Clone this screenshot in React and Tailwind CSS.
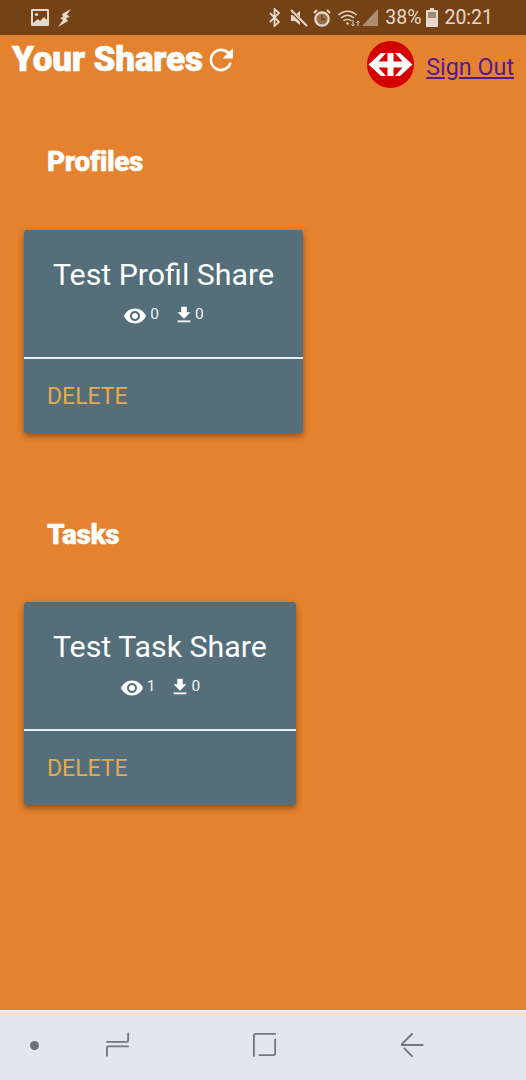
const font = { fontFamily: 'Roboto, sans-serif' };

function StatusBar() {
  return (
    <div className="h-[35px] shrink-0 bg-[#744215] flex items-center text-[#e6d9cc] relative">
      <div className="flex items-center pl-[31px] gap-[9px]">
        <svg width="18" height="17" viewBox="0 0 18 17" className="block">
          <path fill="#e6d9cc" d="M1 0h16a1 1 0 0 1 1 1v15a1 1 0 0 1-1 1H1a1 1 0 0 1-1-1V1a1 1 0 0 1 1-1z" />
          <path fill="#744215" d="M2 2h14v9l-3-3-4 4-2-2-5 4z" />
          <circle cx="5.5" cy="5.5" r="1.6" fill="#e6d9cc" />
        </svg>
        <svg width="14" height="18" viewBox="0 0 14 18" className="block">
          <path fill="#e6d9cc" d="M13 0 4 5l1 3-3 1 3 2-5 7 10-6-2-3 4-1-3-2.5z" />
        </svg>
      </div>
      <div className="ml-auto flex items-center pr-[33px]">
        <svg width="12" height="19" viewBox="0 0 12 19" className="block mr-[9px]" fill="none" stroke="#e6d9cc" strokeWidth="1.8">
          <path d="M1 5l9 9-4.500 4V1L10 5 1 14" />
        </svg>
        <svg width="18" height="18" viewBox="0 0 18 18" className="block mr-[5px]">
          <path fill="#e6d9cc" d="M1 6h4l5-4v14l-5-4H1z" />
          <path stroke="#744215" strokeWidth="3.500" d="M0 1l17 16" />
          <path stroke="#e6d9cc" strokeWidth="2" d="M1 1l16 16" />
        </svg>
        <svg width="18" height="18" viewBox="0 0 18 18" className="block mr-[7px]" fill="none">
          <circle cx="9" cy="10" r="6.700" stroke="#e6d9cc" strokeWidth="2.200" fill="#e6d9cc" fillOpacity="0.300" />
          <path d="M9 6v4.500h3.500" stroke="#744215" strokeWidth="1.300" />
          <path d="M1 4l3-3M17 4l-3-3" stroke="#e6d9cc" strokeWidth="2" />
        </svg>
        <svg width="24" height="18" viewBox="0 0 24 18" className="block" fill="none" stroke="#e6d9cc" strokeWidth="1.400">
          <path d="M0.500 6C6 1 13 1 18.500 6M3 9c4-3.500 9-3.500 13 0M5.500 12c2.500-2 5.500-2 8 0" />
          <circle cx="9.500" cy="14.500" r="1.200" fill="#e6d9cc" stroke="none" />
          <path d="M15 11v6m-1.500-1.500L15 17l1.500-1.500M20 17v-5m-1.500 1.500L20 12l1.500 1.500" strokeWidth="1" />
        </svg>
        <svg width="16" height="17" viewBox="0 0 16 17" className="block mr-[7px]">
          <path fill="#e6d9cc" fillOpacity="0.500" d="M16 0v17H0z" />
        </svg>
        <span style={font} className="text-[19.500px] leading-none text-[#e6d9cc] mr-[5px]">38%</span>
        <svg width="12" height="19" viewBox="0 0 12 19" className="block mr-[6px]">
          <path fill="#e6d9cc" d="M4 0h4v2h3a1 1 0 0 1 1 1v15a1 1 0 0 1-1 1H1a1 1 0 0 1-1-1V3a1 1 0 0 1 1-1h3z" />
          <path fill="#a08a72" d="M2 4h8v6H2z" />
        </svg>
        <span style={font} className="text-[19.500px] leading-none text-[#e6d9cc]">20:21</span>
      </div>
    </div>
  );
}

function Logo() {
  return (
    <svg width="47" height="47" viewBox="0 0 47 47" className="block">
      <circle cx="23.500" cy="23.500" r="23.500" fill="#d40000" />
      <path fill="#fff" d="M1.500 23.500 14 12h5l-7.500 8.500h9V12h6v8.500h9L28 12h5l12.500 11.500L33 35h-5l7.500-8.500h-9V35h-6v-8.500h-9L19 35h-5z" />
    </svg>
  );
}

function Eye() {
  return (
    <svg width="24" height="24" viewBox="0 0 24 24" className="block">
      <path fill="#fff" d="M12 4.500C7 4.500 2.730 7.610 1 12c1.730 4.390 6 7.500 11 7.500s9.270-3.110 11-7.500c-1.730-4.390-6-7.500-11-7.500zM12 17c-2.760 0-5-2.240-5-5s2.240-5 5-5 5 2.240 5 5-2.240 5-5 5zm0-8c-1.660 0-3 1.340-3 3s1.340 3 3 3 3-1.340 3-3-1.340-3-3-3z" />
    </svg>
  );
}

function Download() {
  return (
    <svg width="22" height="22" viewBox="0 0 24 24" className="block">
      <path fill="#fff" d="M19 9h-4V3H9v6H5l7 7 7-7zM5 18v2h14v-2H5z" />
    </svg>
  );
}

function Card({ title, views, downloads, gap }) {
  return (
    <div className={`self-start bg-[#546E7A] rounded-[3px] shadow-[0_3px_6px_rgba(0,0,0,0.4)] ml-[24px] h-[203px] flex flex-col ${gap}`}>
      <div className="h-[129px] shrink-0 px-[29px] pt-[27px] border-b-[2px] border-[#e8eef0]">
        <div style={font} className="text-[30.300px] leading-[36px] text-white text-center whitespace-nowrap">{title}</div>
        <div className="flex justify-center items-start mt-[5px] text-white">
          <div className="mt-[6px]"><Eye /></div>
          <span style={font} className="text-[15.500px] leading-[16px] ml-[3px] mt-[8px] text-[#eef1f2]">{views}</span>
          <div className="ml-[14px] mt-[6px]"><Download /></div>
          <span style={font} className="text-[15.500px] leading-[16px] mt-[8px] text-[#eef1f2]">{downloads}</span>
        </div>
      </div>
      <div className="pl-[23px] pt-[24px]">
        <span style={font} className="text-[23px] leading-[28px] text-[#E8A94F]">DELETE</span>
      </div>
    </div>
  );
}

function Section({ title, views, downloads, card, top, gap }) {
  return (
    <section className={`flex flex-col ${top}`}>
      <h2 style={font} className="pl-[47px] text-[28px] leading-[34px] font-black text-white tracking-[-0.4px] [-webkit-text-stroke:0.4px_white]">{title}</h2>
      <Card title={card} views={views} downloads={downloads} gap={gap} />
    </section>
  );
}

export default function App() {
  return (
    <div className="w-[526px] h-[1080px] flex flex-col bg-[#E5822F] overflow-hidden">
      <StatusBar />
      <main className="flex-1 flex flex-col">
        <header className="flex items-start h-[52px] pt-[6px]">
          <h1 style={font} className="pl-[12px] mt-[1px] text-[35px] leading-[36px] font-black text-white tracking-[-0.15px] whitespace-nowrap [-webkit-text-stroke:0.6px_white]">Your Shares</h1>
          <svg width="26" height="26" viewBox="0 0 24 24" className="block ml-[5px] mt-[6px]" fill="#fff">
            <path d="M19.650 4.350A10.960 10.960 0 0 0 12 1.500a10.500 10.500 0 1 0 10.150 13h-2.750A8 8 0 1 1 12 4c2.200 0 4.100.9 5.550 2.450L13.500 10.500H23V1z" />
          </svg>
          <div className="ml-auto flex items-start">
            <Logo />
            <a href="#" style={font} className="ml-[12px] mr-[12px] mt-[12px] text-[23.300px] leading-[28px] text-[#551A8B] underline">Sign Out</a>
          </div>
        </header>
        <Section top="mt-[58px]" gap="mt-[51px]" title="Profiles" card="Test Profil Share" views="0" downloads="0" />
        <Section top="mt-[85px]" gap="mt-[50px]" title="Tasks" card="Test Task Share" views="1" downloads="0" />
      </main>
      <nav className="h-[70px] shrink-0 bg-[#E4E5EF] border-t-[2px] border-[#f3ecea] relative flex items-center">
        <div className="ml-[30px] w-[9px] h-[9px] rounded-full bg-[#6f7078] mb-[2px]" />
        <svg width="24" height="27" viewBox="0 0 26 28" className="block ml-[67px] mb-[2px]" fill="none" stroke="#75767e" strokeWidth="2" strokeLinecap="round">
          <path d="M1 10h21a2 2 0 0 0 2-2V1M24 15H3a2 2 0 0 0-2 2v8" />
        </svg>
        <svg width="24" height="24" viewBox="0 0 26 26" className="block ml-[123px] mb-[2px]" fill="none" stroke="#75767e" strokeWidth="2" strokeLinecap="round">
          <path d="M24 1H3a2 2 0 0 0-2 2v22M7 24h15a2 2 0 0 0 2-2V7" />
        </svg>
        <svg width="24" height="25" viewBox="0 0 24 26" className="block ml-[123px] mb-[2px]" fill="none" stroke="#75767e" strokeWidth="2" strokeLinecap="round">
          <path d="M12 1 1.500 11.500a1 1 0 0 0 0 1H23M4 16l8 8" />
        </svg>
      </nav>
    </div>
  );
}
